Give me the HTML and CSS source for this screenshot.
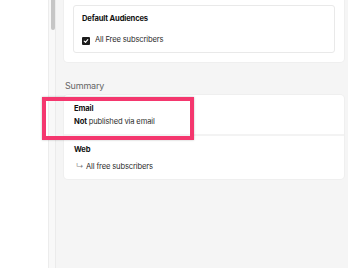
FILE: index.html
```html
<!DOCTYPE html>
<html>
<head>
<meta charset="utf-8">
<link rel="stylesheet" href="styles.css">
</head>
<body>
<div class="app">
  <div class="blank"></div>
  <div class="scrollbar"><div class="thumb"></div></div>
  <main class="panel">
    <section class="outer-card">
      <div class="inner-card">
        <div class="title">Default Audiences</div>
        <label class="check-row">
          <span class="checkbox">
            <svg width="6" height="6" viewBox="0 0 6 6"><path d="M1.2 3.1 L2.5 4.3 L4.8 1.6" fill="none" stroke="#fff" stroke-width="1.1" stroke-linecap="round" stroke-linejoin="round"/></svg>
          </span>
          <span>All Free subscribers</span>
        </label>
      </div>
    </section>
    <h2 class="section-label">Summary</h2>
    <section class="summary-card">
      <div class="summary-block">
        <div class="title">Email</div>
        <div class="line"><strong>Not</strong> published via email</div>
      </div>
      <div class="summary-block web">
        <div class="title">Web</div>
        <div class="line sub"><span class="arrow">↳</span>All free subscribers</div>
      </div>
    </section>
  </main>
</div>
<div class="highlight"></div>
</body>
</html>
```
FILE: styles.css
```css
html, body {
  margin: 0;
  padding: 0;
  background: #ffffff;
  font-family: Inter, "Liberation Sans", sans-serif;
  color: #222;
}
.app {
  display: flex;
  width: 348px;
  height: 268px;
  overflow: hidden;
}
.blank {
  width: 48px;
  flex: none;
  background: #fff;
}
.scrollbar {
  width: 7px;
  flex: none;
  background: #f8f8f8;
  border-left: 1px solid #ececec;
  padding-left: 1px;
  box-sizing: border-box;
}
.thumb {
  width: 4px;
  height: 30px;
  border-radius: 0 0 2px 2px;
  background: #c6c6c6;
  margin-left: 1px;
}
.panel {
  flex: 1;
  background: #f5f5f5;
  border-left: 1px solid #ebebeb;
  padding: 0 4px 0 8px;
}
.outer-card {
  background: #fff;
  margin-top: -20px;
  padding: 25px 9px 9px 9px;
  border-radius: 4px;
  box-shadow: 0 0 0 1px #efefef;
}
.inner-card {
  border: 1px solid #e9e9e9;
  border-radius: 3px;
  padding: 8px 8px 7px 8px;
  display: flex;
  flex-direction: column;
  gap: 11px;
}
.title {
  font-size: 7.6px;
  font-weight: 700;
  line-height: 10px;
  letter-spacing: -0.15px;
  color: #111;
}
.check-row {
  display: flex;
  align-items: center;
  gap: 5px;
  font-size: 7.6px;
  line-height: 10px;
  letter-spacing: -0.15px;
  color: #2e2e2e;
}
.checkbox {
  width: 8px;
  height: 8px;
  border-radius: 1px;
  background: #1c1c1c;
  display: flex;
  align-items: center;
  justify-content: center;
  margin-top: 1px;
}
.section-label {
  margin: 18px 0 3px 1px;
  font-size: 9px;
  font-weight: 400;
  line-height: 12px;
  letter-spacing: -0.2px;
  color: #666;
}
.summary-card {
  background: #fff;
  border-radius: 4px;
  box-shadow: 0 0 0 1px #efefef;
}
.summary-block {
  padding: 9px 10px 7px 10px;
  display: flex;
  flex-direction: column;
  gap: 3px;
}
.summary-block.web {
  border-top: 2px solid #f3f3f3;
  gap: 7px;
}
.line {
  font-size: 7.6px;
  line-height: 10px;
  letter-spacing: -0.15px;
  color: #2e2e2e;
}
.line strong {
  color: #111;
}
.sub {
  display: flex;
  align-items: center;
  padding-left: 2px;
}
.arrow {
  color: #888;
  width: 10px;
  font-size: 7.6px;
}
.highlight {
  position: absolute;
  left: 42px;
  top: 97px;
  width: 152px;
  height: 43px;
  box-sizing: border-box;
  border: 4px solid #f4376e;
  box-shadow: 0 0 2px rgba(0,0,0,0.25);
}
```
